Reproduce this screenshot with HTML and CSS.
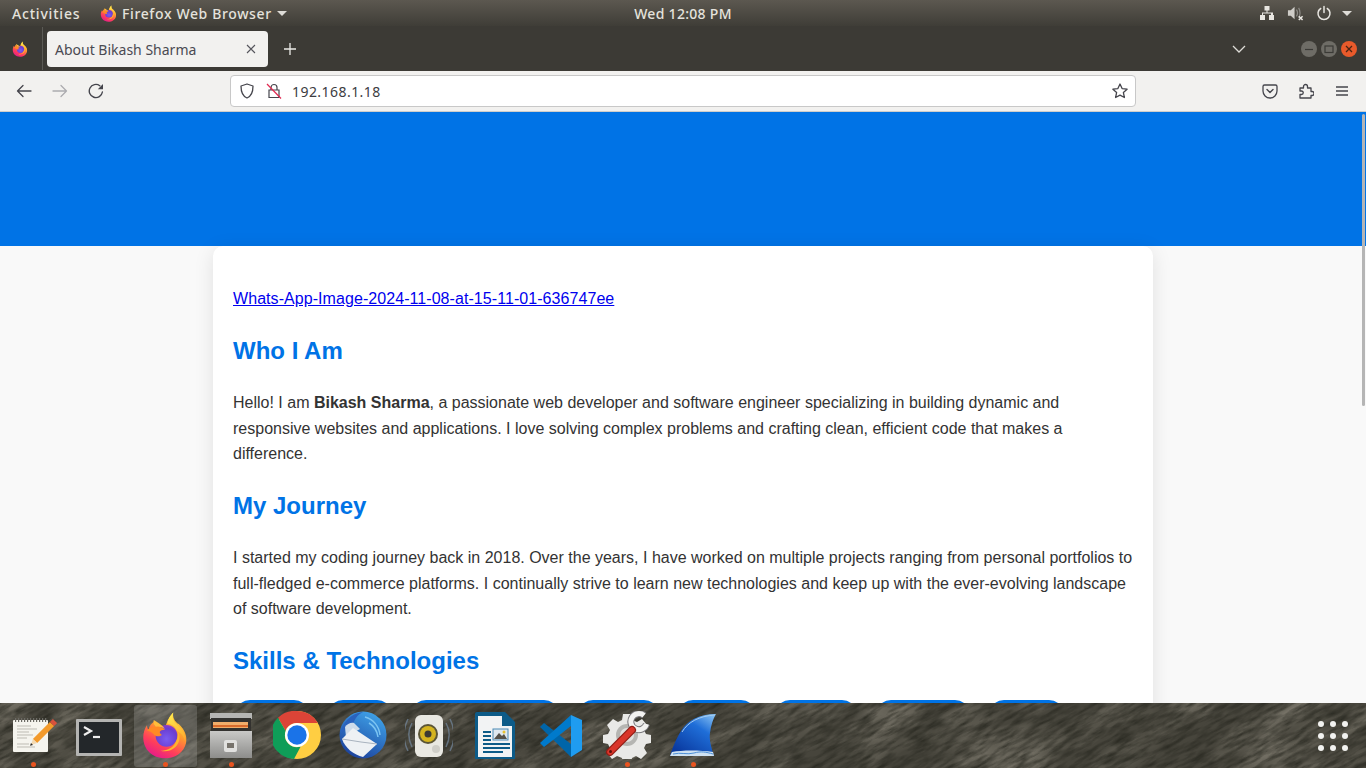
FILE: index.html
```html
<!DOCTYPE html>
<html lang="en">
<head>
    <meta charset="UTF-8">
    <meta name="viewport" content="width=device-width, initial-scale=1.0">
    <title>About Bikash Sharma</title>
    <link rel="stylesheet" href="styles.css">
</head>
<body>
    <!-- shared icons -->
    <svg class="defs" width="0" height="0">
        <defs>
            <linearGradient id="foxBody" x1="0.75" y1="0.05" x2="0.25" y2="1">
                <stop offset="0" stop-color="#ffd53d"/>
                <stop offset="0.35" stop-color="#ff9a2e"/>
                <stop offset="0.7" stop-color="#ff3f5a"/>
                <stop offset="1" stop-color="#e3188f"/>
            </linearGradient>
            <linearGradient id="foxFlame" x1="0.4" y1="0" x2="0.7" y2="1">
                <stop offset="0" stop-color="#ffe94f"/>
                <stop offset="1" stop-color="#ffa92b"/>
            </linearGradient>
            <radialGradient id="foxGlobe" cx="0.5" cy="0.65" r="0.7">
                <stop offset="0" stop-color="#7b5cf0"/>
                <stop offset="0.7" stop-color="#6a3ed0"/>
                <stop offset="1" stop-color="#a13bc4"/>
            </radialGradient>
            <linearGradient id="finBlue" x1="0.85" y1="0" x2="0.2" y2="0.9">
                <stop offset="0" stop-color="#7db9f0"/>
                <stop offset="0.35" stop-color="#1f6ed8"/>
                <stop offset="1" stop-color="#0a3aa0"/>
            </linearGradient>
            <linearGradient id="birdBlue" x1="0.7" y1="0" x2="0.2" y2="1">
                <stop offset="0" stop-color="#3fa2e8"/>
                <stop offset="1" stop-color="#1a3c98"/>
            </linearGradient>
            <linearGradient id="cabinet" x1="0" y1="0" x2="0" y2="1">
                <stop offset="0" stop-color="#c9c9c7"/>
                <stop offset="1" stop-color="#8d8d8b"/>
            </linearGradient>
            <symbol id="firefox" viewBox="0 0 64 64">
                <path fill="url(#foxBody)" d="M43 2c-1 6 1 10 5 14 1 1 2 1 3 2 7 7 11 15 9 25-3 12-14 20-28 20C15 63 3 51 3 35c0-6 2-12 5-16 0 3 1 5 2 6 1-5 4-9 8-11-1 3 0 5 1 6 5-1 10 0 13 3 2-8 5-15 11-21z"/>
                <path fill="url(#foxFlame)" d="M43 2c-2 7 0 12 6 17 7 6 11 13 10 23-1-7-5-13-11-15-2-6-6-9-13-10 1-6 4-11 8-15z"/>
                <circle cx="34" cy="33" r="14.5" fill="url(#foxGlobe)"/>
                <path fill="#ff8a24" d="M8 26c3-3 6-5 10-5 5-1 10 0 14 4-4 0-6 1-7 3 0 2 2 3 3 4-4 3-9 2-11-1-3-3-6-4-9-5z"/>
                <path fill="#ffbd3a" d="M17 12c-1 4 0 7 3 9 4-1 8 0 12 3-4-6-9-8-15-12z"/>
                <path fill="#ffb52e" d="M49 27c4 6 3 15-3 21-5 5-13 7-20 5 8 0 15-3 19-9 3-5 5-11 4-17z"/>
            </symbol>
        </defs>
    </svg>

    <header class="topbar">
        <div class="topbar-left">
            <span class="top-activities">Activities</span>
            <span class="app-menu">
                <svg class="app-fox"><use href="#firefox"/></svg>
                <span class="top-app">Firefox Web Browser</span>
                <span class="caret"></span>
            </span>
        </div>
        <div class="clock">Wed 12:08 PM</div>
        <div class="tray">
            <svg class="tray-net" viewBox="0 0 16 16"><path fill="#e8e6e1" d="M5.500 1h5v4.500h-2v2h5.500V10H15v5h-5v-5h2V8.500H4V10h2v5H1v-5h2V7.500h4.500v-2h-2z"/></svg>
            <svg class="tray-vol" viewBox="0 0 18 16"><path fill="#cfcdc8" d="M1 5h3l4-3.500v13L4 11H1z"/><path fill="none" stroke="#8d8b86" stroke-width="1.300" d="M10 4.500c1.300 2 1.300 5 0 7M12.300 2.500c2 3 2 8 0 11"/><path fill="none" stroke="#e8e6e1" stroke-width="1.600" d="M12.500 11.500l4 4M16.500 11.500l-4 4"/></svg>
            <svg class="tray-power" viewBox="0 0 16 16"><path fill="none" stroke="#e8e6e1" stroke-width="1.500" stroke-linecap="round" d="M8 1.500v6M4.700 3.500a6 6 0 1 0 6.600 0"/></svg>
            <span class="caret"></span>
        </div>
    </header>

    <div class="tabbar">
        <svg class="tab-fox"><use href="#firefox"/></svg>
        <span class="tab-sep"></span>
        <div class="tab">
            <span class="tab-title">About Bikash Sharma</span>
            <svg class="tab-close" viewBox="0 0 10 10"><path fill="none" stroke="#55555c" stroke-width="1.100" d="M1 1l8 8M9 1l-8 8"/></svg>
        </div>
        <svg class="tab-new" viewBox="0 0 14 14"><path fill="none" stroke="#ecebe8" stroke-width="1.300" d="M7 1v12M1 7h12"/></svg>
        <svg class="tab-list" viewBox="0 0 14 8"><path fill="none" stroke="#dedcd7" stroke-width="1.300" d="M1 1l6 6 6-6"/></svg>
        <div class="window-btns">
            <span class="win-btn"><svg viewBox="0 0 10 10"><path stroke="#3b3a36" stroke-width="1.200" d="M1 5.500h8"/></svg></span>
            <span class="win-btn"><svg viewBox="0 0 10 10"><rect x="1" y="2" width="8" height="6.500" fill="none" stroke="#3b3a36" stroke-width="1.200"/></svg></span>
            <span class="win-btn win-close"><svg viewBox="0 0 10 10"><path stroke="#4a2413" stroke-width="1.300" d="M2 2l6 6M8 2l-6 6"/></svg></span>
        </div>
    </div>

    <nav class="toolbar">
        <svg class="nav-icon nav-back" viewBox="0 0 16 16"><path fill="none" stroke="#45454c" stroke-width="1.300" stroke-linecap="round" stroke-linejoin="round" d="M15 8H1.500M7 2.500L1.500 8 7 13.500"/></svg>
        <svg class="nav-icon nav-forward" viewBox="0 0 16 16"><path fill="none" stroke="#acacb0" stroke-width="1.300" stroke-linecap="round" stroke-linejoin="round" d="M1 8h13.500M9 2.500L14.500 8 9 13.500"/></svg>
        <svg class="nav-icon nav-reload" viewBox="0 0 16 16"><path fill="none" stroke="#45454c" stroke-width="1.400" stroke-linecap="round" d="M14.400 9A6.600 6.600 0 1 1 11.800 2.700"/><path fill="#45454c" d="M15 1v5.200H9.800z"/></svg>
        <div class="urlbar">
            <svg class="url-shield" viewBox="0 0 16 16"><path fill="none" stroke="#45454c" stroke-width="1.300" stroke-linejoin="round" d="M8 1l6 2c0 6-1 10-6 12C3 13 2 9 2 3z"/></svg>
            <svg class="url-lock" viewBox="0 0 16 16"><path fill="none" stroke="#45454c" stroke-width="1.200" d="M5 7V4.500a3 3 0 0 1 6 0V7M3 7h10v7.500H3z"/><path stroke="#e22850" stroke-width="1.200" d="M1 1l14 14.500"/></svg>
            <span class="url-text">192.168.1.18</span>
            <svg class="url-star" viewBox="0 0 16 16"><path fill="none" stroke="#45454c" stroke-width="1.300" stroke-linejoin="round" d="M8 1l2.100 4.600 5 .6-3.700 3.400 1 4.900L8 12.100l-4.400 2.400 1-4.900L.9 6.200l5-.6z"/></svg>
        </div>
        <div class="toolbar-right">
            <svg class="nav-icon" viewBox="0 0 16 16"><path fill="none" stroke="#45454c" stroke-width="1.300" stroke-linejoin="round" d="M2.500 2h11A1.500 1.500 0 0 1 15 3.500V8A7 7 0 0 1 1 8V3.500A1.500 1.500 0 0 1 2.500 2z"/><path fill="none" stroke="#45454c" stroke-width="1.400" stroke-linecap="round" stroke-linejoin="round" d="M5 6.500l3 3 3-3"/></svg>
            <svg class="nav-icon" viewBox="0 0 16 16"><path fill="none" stroke="#45454c" stroke-width="1.300" stroke-linejoin="round" d="M2 5h3.500V3.500a2 2 0 0 1 4 0V5H13v3.500h1a2 2 0 0 1 0 4h-1V15H2v-3.500h1.500a1.700 1.700 0 0 0 0-3.500H2z"/></svg>
            <svg class="nav-icon" viewBox="0 0 16 16"><path stroke="#45454c" stroke-width="1.300" d="M2 4h12M2 8h12M2 12h12"/></svg>
        </div>
    </nav>

    <main class="viewport">
        <div class="hero"></div>
        <article class="card">
            <p class="photo-line"><a href="#">Whats-App-Image-2024-11-08-at-15-11-01-636747ee</a></p>
            <h2>Who I Am</h2>
            <p>Hello! I am <strong>Bikash Sharma</strong>, a passionate web developer and software engineer specializing in building dynamic and responsive websites and applications. I love solving complex problems and crafting clean, efficient code that makes a difference.</p>
            <h2>My Journey</h2>
            <p>I started my coding journey back in 2018. Over the years, I have worked on multiple projects ranging from personal portfolios to full-fledged e-commerce platforms. I continually strive to learn new technologies and keep up with the ever-evolving landscape of software development.</p>
            <h2>Skills &amp; Technologies</h2>
            <div class="chips">
                <span class="chip"></span>
                <span class="chip"></span>
                <span class="chip"></span>
                <span class="chip"></span>
                <span class="chip"></span>
                <span class="chip"></span>
                <span class="chip"></span>
                <span class="chip"></span>
            </div>
        </article>
        <div class="scrollbar"></div>
    </main>

    <footer class="dock">
        <svg class="dock-rock" width="1366" height="65">
            <filter id="rockCoarse" x="0" y="0" width="100%" height="100%" color-interpolation-filters="sRGB">
                <feTurbulence type="fractalNoise" baseFrequency="0.012 0.035" numOctaves="3" seed="4"/>
                <feColorMatrix values="0 0 0 0 0.58  0 0 0 0 0.56  0 0 0 0 0.51  1.400 0 0 0 -0.560"/>
            </filter>
            <filter id="rockFine" x="0" y="0" width="100%" height="100%" color-interpolation-filters="sRGB">
                <feTurbulence type="fractalNoise" baseFrequency="0.05 0.25" numOctaves="4" seed="9"/>
                <feColorMatrix values="0 0 0 0 0.15  0 0 0 0 0.15  0 0 0 0 0.12  1.600 0 0 0 -0.550"/>
            </filter>
            <g transform="rotate(-28 683 32)">
                <rect x="-200" y="-500" width="1766" height="1065" filter="url(#rockCoarse)"/>
                <rect x="-200" y="-500" width="1766" height="1065" filter="url(#rockFine)"/>
            </g>
        </svg>

        <div class="dock-apps">
            <div class="dock-item running">
                <svg class="dock-icon" viewBox="0 0 48 48">
                    <rect x="4" y="9" width="35" height="32" rx="1" fill="#f5f4ee"/>
                    <path stroke="#6b6a64" stroke-width="4" stroke-dasharray="1.200 1.800" d="M6 9h32"/>
                    <path stroke="#bdbbb3" stroke-width="1" d="M8 15h14M8 18h20M8 21h12M8 24h16M8 27h10M8 33h12M8 36h18"/>
                    <path stroke="#f39a2b" stroke-width="6" d="M26 30l17-17"/>
                    <path stroke="#d8513c" stroke-width="6" d="M43 13l3-3"/>
                    <path fill="#f4d9b0" d="M23.900 27.900l4.200 4.200L22 34z"/>
                    <path fill="#2e2b28" d="M22 32l2 2-3 .8z"/>
                </svg>
            </div>
            <div class="dock-item">
                <svg class="dock-icon" viewBox="0 0 48 48">
                    <rect x="1" y="8" width="46" height="37" rx="1" fill="#b4b4b2"/>
                    <rect x="4" y="11" width="40" height="31" fill="#23272a"/>
                    <path fill="none" stroke="#eee" stroke-width="2.200" d="M9 16l7 4-7 4"/>
                    <path stroke="#eee" stroke-width="2.200" d="M18 26h7"/>
                </svg>
            </div>
            <div class="dock-item active running">
                <svg class="dock-icon dock-fox"><use href="#firefox"/></svg>
            </div>
            <div class="dock-item running">
                <svg class="dock-icon" viewBox="0 0 48 48">
                    <rect x="3" y="2" width="42" height="6" fill="#b5b5b3"/>
                    <rect x="4" y="7" width="40" height="17" fill="#33322f"/>
                    <path fill="#f1ad6a" d="M6 11h35v6H6z"/>
                    <path fill="#d96b2b" d="M6 14h35v2H6z"/>
                    <rect x="3" y="20" width="42" height="27" fill="url(#cabinet)"/>
                    <rect x="17" y="29" width="13" height="12" rx="2" fill="#e1e1df"/>
                    <rect x="20" y="32" width="7" height="5" fill="#77736c"/>
                </svg>
            </div>
            <div class="dock-item">
                <svg class="dock-icon" viewBox="0 0 48 48">
                    <circle cx="24" cy="24" r="24" fill="#ffce42"/>
                    <path fill="#dc4437" d="M24 0a24 24 0 0 1 20.800 12H24a12 12 0 0 0-11.300 8L5 6.800A24 24 0 0 1 24 0z"/>
                    <path fill="#0f9d58" d="M5 6.800l7.700 13.200a12 12 0 0 0 15 15.500L21 48A24 24 0 0 1 5 6.800z"/>
                    <circle cx="24" cy="24" r="12" fill="#fff"/>
                    <circle cx="24" cy="24" r="9.700" fill="#1a73e8"/>
                </svg>
            </div>
            <div class="dock-item">
                <svg class="dock-icon" viewBox="0 0 48 48">
                    <circle cx="24" cy="24" r="23.500" fill="url(#birdBlue)"/>
                    <path fill="none" stroke="#7cc4f2" stroke-width="1.500" d="M26 6c8 2 14 9 15 18M30 12c5 3 8 7 9 14"/>
                    <path fill="#2a62bd" d="M2 22C3 12 12 2 24 1c-6 3-9 8-10 13z"/>
                    <path fill="#cfdcea" d="M6 16c2-3 6-5 9-4l6 6-14 8z"/>
                    <path fill="#eef1f4" d="M3 28l11-11 24 16-14 13c-9-2-18-9-21-18z"/>
                    <path fill="none" stroke="#a9b3bf" d="M3 28l19 3 16 2"/>
                </svg>
            </div>
            <div class="dock-item">
                <svg class="dock-icon" viewBox="0 0 48 48">
                    <path fill="none" stroke="#7c93ad" stroke-opacity="0.600" stroke-width="1.500" d="M7 12c-4 7-4 16 0 24M3 8c-5 10-5 22 0 32M41 12c4 7 4 16 0 24M45 8c5 10 5 22 0 32"/>
                    <rect x="10" y="4" width="28" height="42" rx="6" fill="#e9e8e2"/>
                    <circle cx="23" cy="23" r="10" fill="#5b5536"/>
                    <circle cx="23" cy="23" r="8" fill="#d5b41f"/>
                    <circle cx="23" cy="23" r="3.500" fill="#3c3a33"/>
                    <circle cx="31" cy="38" r="4" fill="#cfcec8"/>
                </svg>
            </div>
            <div class="dock-item">
                <svg class="dock-icon" viewBox="0 0 48 48">
                    <path fill="#0d5b88" d="M4 3a2 2 0 0 1 2-2h28l10 10v36a2 2 0 0 1-2 2H6a2 2 0 0 1-2-2z"/>
                    <path fill="#f2f3f4" d="M7 5h24v10h10v31H7z"/>
                    <path fill="#0d5b88" d="M33 1l11 11H33z"/>
                    <path stroke="#0d5b88" stroke-width="2" d="M12 21h8M12 25h8M12 29h8M12 33h27M12 37h27M12 41h20"/>
                    <rect x="22" y="18" width="15" height="11" fill="#dfe8ef" stroke="#4b8ab5"/>
                    <path fill="#55514a" d="M23 28l5-6 3 3 2-2 3 5z"/>
                    <circle cx="33" cy="21" r="1.500" fill="#e9c12f"/>
                </svg>
            </div>
            <div class="dock-item">
                <svg class="dock-icon" viewBox="0 0 48 48">
                    <path fill="#0065a9" d="M3 16l4-4 27 21v13z"/>
                    <path fill="#007acc" d="M34 4v11L7 36l-4-4z"/>
                    <path fill="#1f9cf0" d="M34 4l11 5v30l-11 7z"/>
                </svg>
            </div>
            <div class="dock-item running">
                <svg class="dock-icon" viewBox="0 0 48 48">
                    <path fill="#e9e9e7" d="M20 3h8l1 6 5 2 5-3 5 6-3 5 2 4 5 1v8l-5 1-2 4 3 5-6 6-5-3-4 2-1 5h-8l-1-5-5-2-5 3-5-6 3-5-2-4-5-1v-8l5-1 2-4-3-5 6-6 5 3 4-2z"/>
                    <circle cx="24" cy="24" r="11" fill="#b5b5b2"/>
                    <circle cx="24" cy="24" r="7" fill="#e0e0de"/>
                    <path fill="none" stroke="#77767a" stroke-width="7" d="M41 4.500A8 8 0 1 0 43.500 13"/>
                    <path fill="none" stroke="#f2f2f0" stroke-width="5" d="M41 4.500A8 8 0 1 0 43.500 13"/>
                    <path stroke="#8f1d16" stroke-width="8" stroke-linecap="round" d="M7 41l22-22"/>
                    <path stroke="#d9352a" stroke-width="5.500" stroke-linecap="round" d="M7 41l22-22"/>
                    <circle cx="7.500" cy="40.500" r="1.500" fill="#5c120e"/>
                </svg>
            </div>
            <div class="dock-item running">
                <svg class="dock-icon" viewBox="0 0 48 48">
                    <path fill="url(#finBlue)" d="M47 3C30 3 18 10 12 20 7 28 3 38 1 45h44c-3-9-5-17-4-23 1-8 3-14 6-19z"/>
                    <path fill="none" stroke="#a6cdf0" stroke-width="1" d="M46 4C30 5 19 11 13 21"/>
                    <path fill="#cfe2f2" d="M3 41c10-2 28-2 41 0l1 4H1z"/>
                    <path fill="none" stroke="#4d8fd6" stroke-width="1" d="M4 43c8-2 14 1 21-1s12-1 19 1"/>
                </svg>
            </div>
        </div>

        <div class="show-apps">
            <span></span><span></span><span></span>
            <span></span><span></span><span></span>
            <span></span><span></span><span></span>
        </div>
    </footer>
</body>
</html>
```

FILE: styles.css
```css
* {
    box-sizing: border-box;
}

html, body {
    height: 100%;
}

body {
    margin: 0;
    height: 768px;
    overflow: hidden;
    display: flex;
    flex-direction: column;
    font-family: "Noto Sans", sans-serif;
}

.defs {
    position: absolute;
}

/* gnome top bar */
.topbar {
    height: 26px;
    flex: none;
    display: flex;
    align-items: center;
    justify-content: space-between;
    position: relative;
    padding: 0 14px 0 12px;
    background: linear-gradient(#5c5850, #3f3d37);
    color: #e4e2dc;
    font-size: 14px;
    font-weight: 500;
}

.topbar-left {
    display: flex;
    align-items: center;
    gap: 20px;
}

.top-activities {
    width: 68px;
    letter-spacing: 0.8px;
}

.top-app {
    letter-spacing: 0.63px;
}

.app-menu {
    display: flex;
    align-items: center;
    gap: 5px;
}

.app-fox {
    width: 17px;
    height: 17px;
}

.caret {
    width: 0;
    height: 0;
    border-left: 5px solid transparent;
    border-right: 5px solid transparent;
    border-top: 5px solid #dedcd7;
}

.clock {
    position: absolute;
    left: 0;
    right: 0;
    text-align: center;
    letter-spacing: 0.3px;
}

.tray {
    display: flex;
    align-items: center;
}

.tray-net {
    width: 16px;
    height: 16px;
    margin-right: 12px;
}

.tray-vol {
    width: 17px;
    height: 16px;
    margin-right: 12px;
}

.tray-power {
    width: 16px;
    height: 16px;
    margin-right: 10px;
}

/* firefox tabs */
.tabbar {
    height: 45px;
    flex: none;
    display: flex;
    align-items: center;
    background: #3c3a35;
}

.tab-fox {
    width: 16px;
    height: 16px;
    margin: 0 14px 0 12px;
}

.tab-sep {
    width: 1px;
    height: 43px;
    background: #5b5a55;
    margin-right: 4px;
}

.tab {
    width: 221px;
    height: 36px;
    margin-top: 1px;
    display: flex;
    align-items: center;
    justify-content: space-between;
    padding: 0 12px 0 8px;
    background: #f2f1ef;
    border-radius: 4px;
    color: #4a4a52;
    font-size: 14px;
}

.tab-close {
    width: 10px;
    height: 10px;
}

.tab-new {
    width: 14px;
    height: 14px;
    margin-left: 15px;
}

.tab-list {
    width: 14px;
    height: 8px;
    margin-left: auto;
}

.window-btns {
    display: flex;
    gap: 4px;
    margin: 0 9px 0 55px;
}

.win-btn {
    width: 16px;
    height: 16px;
    border-radius: 50%;
    background: #6e6c66;
    display: flex;
    align-items: center;
    justify-content: center;
}

.win-btn svg {
    width: 10px;
    height: 10px;
}

.win-close {
    background: #e95a2b;
}

/* firefox toolbar */
.toolbar {
    height: 41px;
    flex: none;
    display: flex;
    align-items: center;
    padding: 0 16px;
    background: #f2f1ef;
    border-bottom: 1px solid #cfcecb;
}

.nav-icon {
    width: 16px;
    height: 16px;
}

.nav-forward {
    margin-left: 20px;
}

.nav-reload {
    margin-left: 20px;
}

.urlbar {
    width: 906px;
    height: 32px;
    margin-left: 126px;
    display: flex;
    align-items: center;
    background: #fff;
    border: 1px solid #c8c8c8;
    border-radius: 4px;
    padding: 0 7px 0 8px;
    color: #3c3c42;
    font-size: 14px;
}

.url-shield, .url-lock, .url-star {
    width: 16px;
    height: 16px;
}

.url-lock {
    margin-left: 11px;
}

.url-text {
    margin-left: 10px;
    letter-spacing: 0.45px;
}

.url-star {
    margin-left: auto;
}

.toolbar-right {
    display: flex;
    gap: 20px;
    margin-left: auto;
}

/* the page inside the browser */
.viewport {
    flex: 1;
    min-height: 0;
    overflow: hidden;
    position: relative;
    background: #f9f9f9;
    font-family: "Liberation Sans", Arial, sans-serif;
    color: #333;
    font-size: 16px;
    line-height: 1.6;
}

.hero {
    height: 134px;
    background: #0073e6;
}

.card {
    width: 940px;
    margin: 0 auto;
    padding: 20px;
    background: #fff;
    border-radius: 10px;
    position: relative;
    box-shadow: 0 4px 20px rgba(0, 0, 0, 0.1);
}

.card h2 {
    margin: 20px 0;
    font-size: 24px;
    line-height: 38.400px;
    color: #0073e6;
}

.card p {
    margin: 16px 0;
}

.card .photo-line {
    margin-top: 20px;
}

.card a {
    color: #00e;
    letter-spacing: 0.064px;
}

.chips {
    display: flex;
    gap: 19px;
    margin-top: 20px;
    padding-left: 2px;
}

.chip {
    height: 36px;
    background: #0073e6;
    border-radius: 15px;
}

.chip:nth-child(1) { width: 74px; }
.chip:nth-child(2) { width: 64px; }
.chip:nth-child(3) { width: 148px; }
.chip:nth-child(4) { width: 81px; }
.chip:nth-child(5) { width: 78px; }
.chip:nth-child(6) { width: 82px; }
.chip:nth-child(7) { width: 94px; }
.chip:nth-child(8) { width: 75px; }

.scrollbar {
    position: absolute;
    top: 2px;
    right: 1px;
    width: 3px;
    height: 292px;
    border-radius: 2px;
    background: #b5b5b5;
}

/* ubuntu dock */
.dock {
    height: 65px;
    flex: none;
    position: relative;
    display: flex;
    align-items: center;
    background: #47453c;
}

.dock-rock {
    position: absolute;
    left: 0;
    top: 0;
}

.dock-apps {
    display: flex;
    position: relative;
}

.dock-item {
    width: 66px;
    height: 65px;
    display: flex;
    align-items: center;
    justify-content: center;
    position: relative;
}

.dock-icon {
    width: 48px;
    height: 48px;
    margin-top: -1px;
}

.active::before {
    content: "";
    position: absolute;
    left: 2px;
    right: 1px;
    top: 2px;
    bottom: 1px;
    border-radius: 3px;
    background: rgba(255, 255, 255, 0.16);
}

.dock-fox {
    position: relative;
}

.running::after {
    content: "";
    position: absolute;
    left: 31px;
    bottom: 1px;
    width: 5px;
    height: 5px;
    border-radius: 50%;
    background: #e95420;
}

.show-apps {
    position: relative;
    margin-left: auto;
    margin-right: 18px;
    display: grid;
    grid-template-columns: repeat(3, 6px);
    gap: 6px;
}

.show-apps span {
    width: 6px;
    height: 6px;
    border-radius: 50%;
    background: #f2f2f0;
}
```
